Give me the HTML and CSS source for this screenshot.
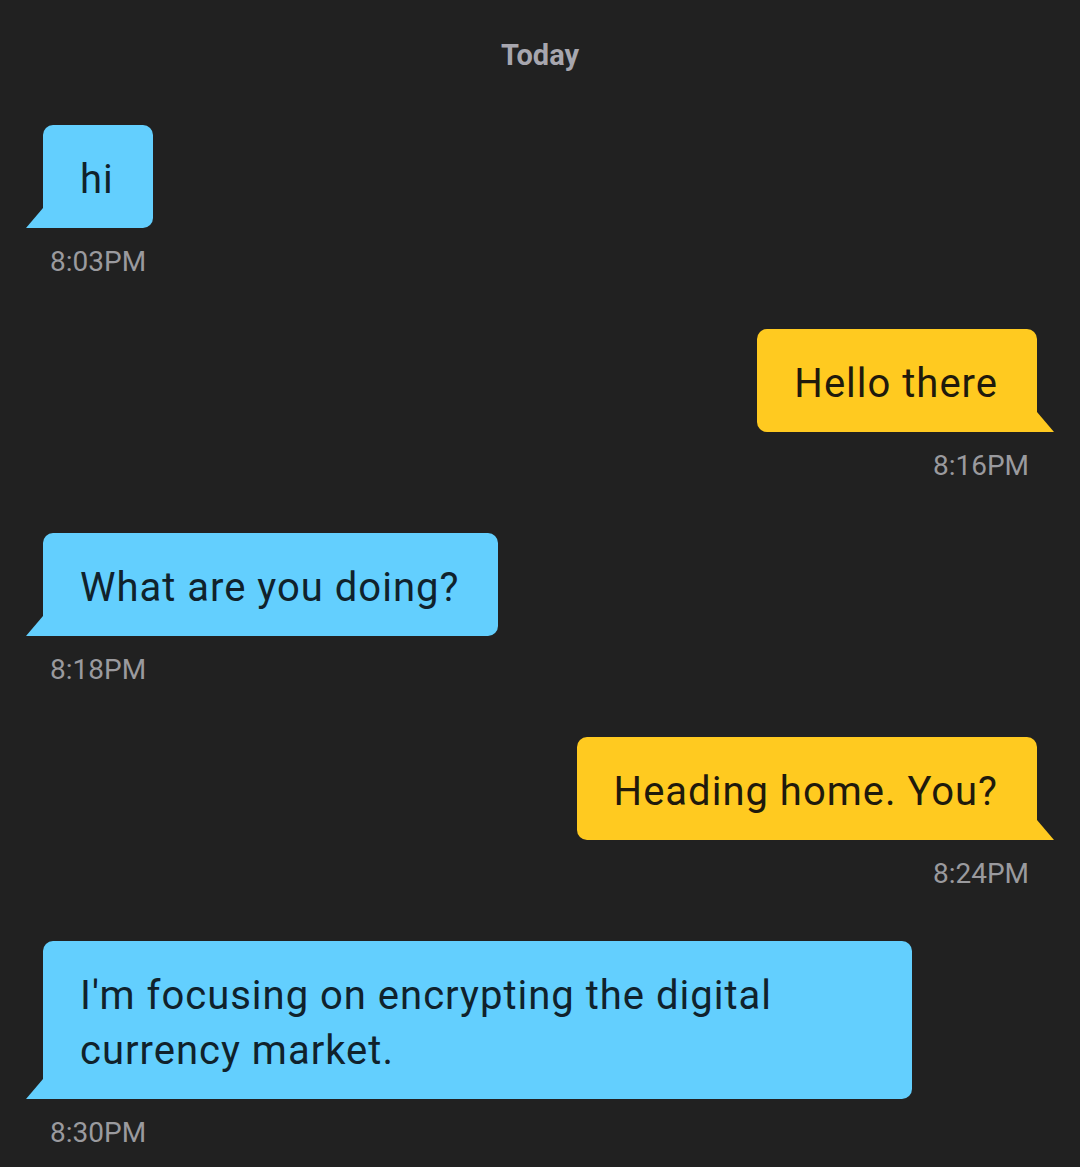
FILE: index.html
```html
<!DOCTYPE html>
<html lang="en">
<head>
  <meta charset="UTF-8">
  <meta name="viewport" content="width=device-width, initial-scale=1.0">
  <title>Chat</title>
  <link rel="stylesheet" href="styles.css">
</head>
<body>
  <div id="chat">
    <p class="day">Today</p>

    <div class="message theirs">
      <div class="bubble">hi</div>
      <span class="time">8:03PM</span>
    </div>

    <div class="message mine">
      <div class="bubble">Hello there</div>
      <span class="time">8:16PM</span>
    </div>

    <div class="message theirs">
      <div class="bubble">What are you doing?</div>
      <span class="time">8:18PM</span>
    </div>

    <div class="message mine">
      <div class="bubble">Heading home. You?</div>
      <span class="time">8:24PM</span>
    </div>

    <div class="message theirs">
      <div class="bubble">I'm focusing on encrypting the digital currency market.</div>
      <span class="time">8:30PM</span>
    </div>
  </div>
</body>
</html>
```

FILE: styles.css
```css
body {
  margin: 0;
  background: #212121;
  font-family: Roboto, "Noto Sans", sans-serif;
}

#chat {
  padding: 35px 43px 0;
  display: flex;
  flex-direction: column;
}

.day {
  margin: 0 0 50px;
  text-align: center;
  font-size: 29px;
  line-height: 40px;
  font-weight: bold;
  color: #a7a6ae;
}

.message {
  display: flex;
  flex-direction: column;
  margin-bottom: 49px;
}

.theirs {
  align-items: flex-start;
}

.mine {
  align-items: flex-end;
}

.bubble {
  position: relative;
  max-width: 793px;
  padding: 27px 39px 21px 37px;
  border-radius: 10px;
  font-size: 40px;
  line-height: 55px;
  letter-spacing: 1px;
}

.bubble::after {
  content: "";
  position: absolute;
  bottom: 0;
  width: 17px;
  height: 20px;
  background: inherit;
}

.theirs .bubble {
  background: #63cffe;
  color: #10222c;
  border-bottom-left-radius: 0;
}

.theirs .bubble::after {
  left: -17px;
  clip-path: polygon(100% 0, 100% 100%, 0 100%);
}

.mine .bubble {
  background: #ffca20;
  color: #1f1a0c;
  border-bottom-right-radius: 0;
}

.mine .bubble::after {
  right: -17px;
  clip-path: polygon(0 0, 100% 100%, 0 100%);
}

.time {
  margin-top: 16px;
  font-size: 28px;
  line-height: 36px;
  color: #9a9a9e;
}

.theirs .time {
  margin-left: 7px;
}

.mine .time {
  margin-right: 8px;
}
```
